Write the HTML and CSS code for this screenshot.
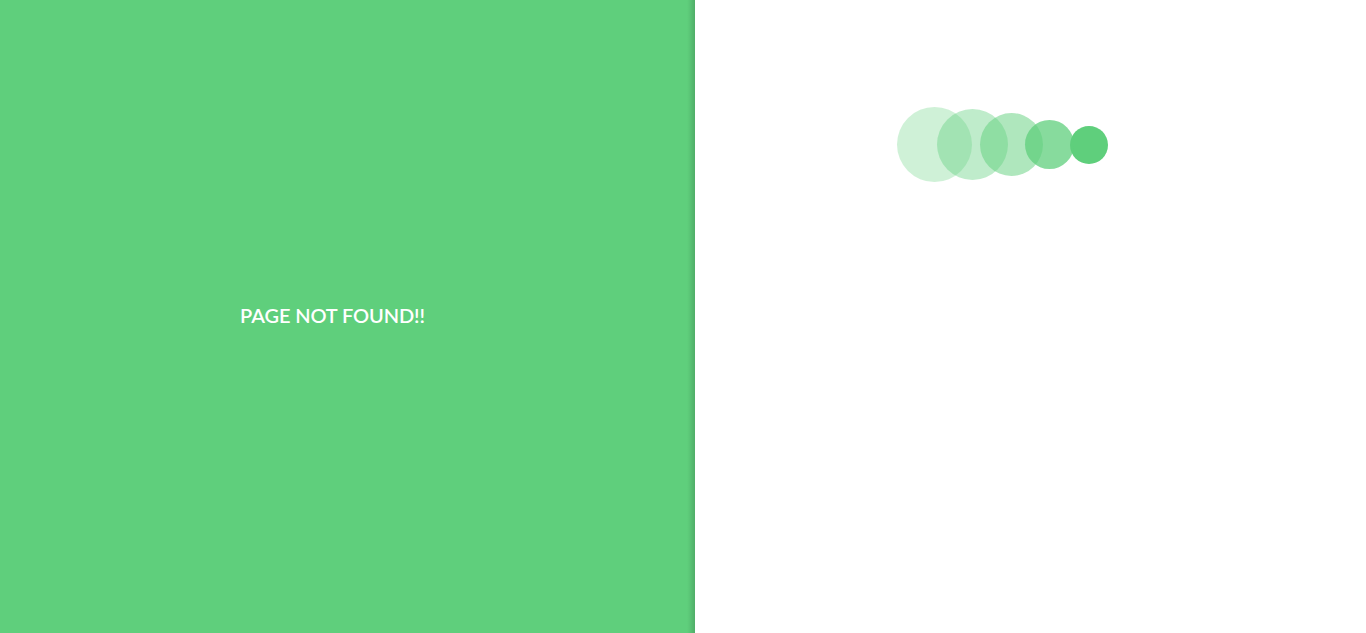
FILE: index.html
```html
<!DOCTYPE html>
<html>
<head>
<meta charset="utf-8">
<link rel="stylesheet" href="styles.css">
</head>
<body>
<div class="page">
  <section class="left">
    <h1 class="title">PAGE NOT FOUND!!</h1>
  </section>
  <section class="right">
    <div class="loader">
      <span class="dot d1"></span>
      <span class="dot d2"></span>
      <span class="dot d3"></span>
      <span class="dot d4"></span>
      <span class="dot d5"></span>
    </div>
  </section>
</div>
</body>
</html>
```
FILE: styles.css
```css
html, body {
  margin: 0;
  padding: 0;
  height: 100%;
  background: #fff;
}
.page {
  display: flex;
  height: 633px;
  overflow: hidden;
}
.left {
  width: 695px;
  flex: none;
  background-color: #5fcf7c;
  background-image: linear-gradient(to right, rgba(0, 0, 0, 0) 0, rgba(0, 0, 0, 0) 687px, rgba(0, 0, 0, 0.05) 690px, rgba(0, 0, 0, 0.12) 693px, rgba(0, 0, 0, 0.16) 695px);
  display: flex;
  align-items: center;
  justify-content: center;
  padding-right: 30px;
  padding-bottom: 3px;
  box-sizing: border-box;
}
.title {
  margin: 0;
  color: #fff;
  font-family: Lato, "Liberation Sans", sans-serif;
  font-weight: 600;
  font-size: 20px;
  letter-spacing: -0.1px;
}
.right {
  flex: 1;
  background: #fff;
  padding-top: 107px;
  padding-left: 202px;
}
.loader {
  display: flex;
  align-items: center;
  height: 75px;
}
.dot {
  display: block;
  border-radius: 50%;
  background: #5fcf7c;
  flex: none;
}
.d1 { width: 75px; height: 75px; opacity: 0.3; }
.d2 { width: 71px; height: 71px; opacity: 0.4; margin-left: -35px; }
.d3 { width: 63px; height: 63px; opacity: 0.5; margin-left: -28px; }
.d4 { width: 49px; height: 49px; opacity: 0.75; margin-left: -18px; }
.d5 { width: 38px; height: 38px; opacity: 1; margin-left: -4px; }
```
